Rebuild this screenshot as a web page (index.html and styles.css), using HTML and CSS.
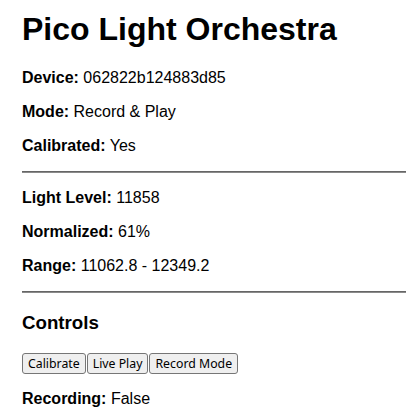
FILE: index.html
```html
<!DOCTYPE html>
<html>
<head>
<meta charset="utf-8">
<link rel="stylesheet" href="styles.css">
</head>
<body>
<div class="page">
  <h1 class="title">Pico Light Orchestra</h1>
  <p><b>Device:</b> 062822b124883d85</p>
  <p><b>Mode:</b> Record &amp; Play</p>
  <p><b>Calibrated:</b> Yes</p>
  <hr class="rule">
  <p><b>Light Level:</b> 11858</p>
  <p><b>Normalized:</b> 61%</p>
  <p><b>Range:</b> 11062.8 - 12349.2</p>
  <hr class="rule">
  <h3 class="section">Controls</h3>
  <div class="controls"><button class="btn">Calibrate</button><button class="btn">Live Play</button><button class="btn">Record Mode</button></div>
  <p><b>Recording:</b> False</p>
</div>
</body>
</html>
```
FILE: styles.css
```css
html, body {
  margin: 0;
  padding: 0;
  background: #fff;
}
.page {
  font-family: "Liberation Sans", Arial, sans-serif;
  font-size: 16px;
  color: #000;
  padding: 11px 0 0 22px;
}
.title {
  font-size: 32px;
  margin: 0 0 21px;
  line-height: 37px;
}
p {
  margin: 16px 0;
  line-height: 18px;
}
.rule {
  margin: 8px 0;
  border: 0;
  border-top: 1px solid #666;
  border-bottom: 1px solid #8a8a8a;
  height: 0;
}
.section {
  font-size: 18.72px;
  margin: 18.72px 0;
}
.controls {
  display: flex;
  gap: 1px;
  padding-top: 1px;
}
.btn {
  font-family: "Noto Sans", "DejaVu Sans", sans-serif;
  font-size: 12.3px;
  line-height: 17px;
  padding: 1px 5px;
  margin: 0;
  background: #efefef;
  border: 1px solid #767676;
  border-radius: 3px;
  color: #000;
}
```
